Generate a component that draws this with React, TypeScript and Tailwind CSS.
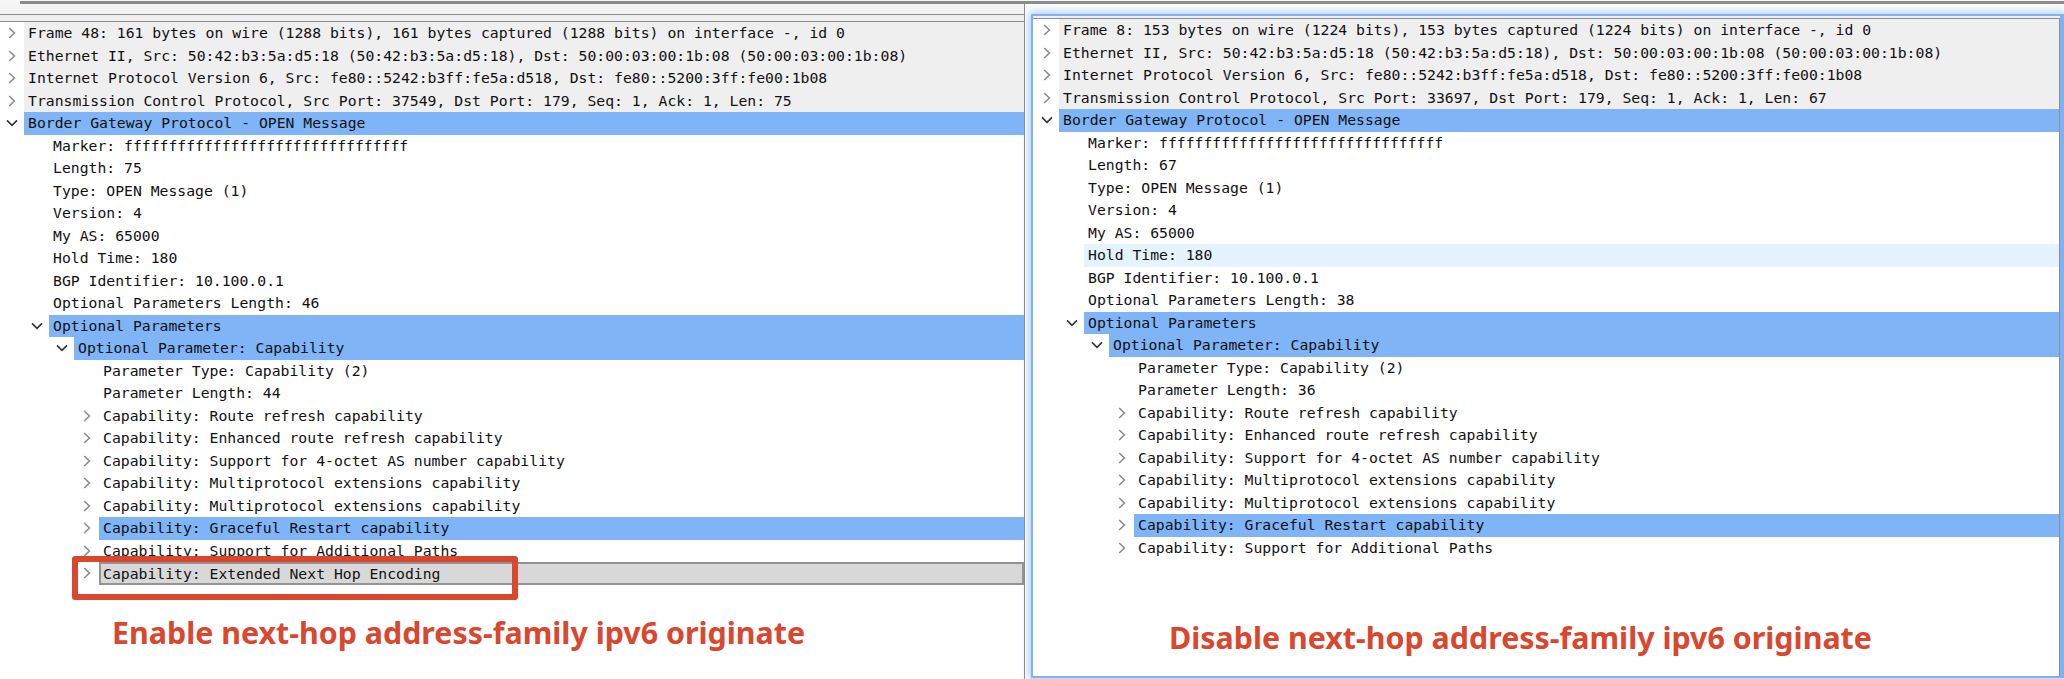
import React from "react";

type RowData = {
    text: string
    depth: number
    arrow?: "right" | "down"
    look?: "head" | "selected" | "hover" | "focus"
}

const depthWidth = ["w-[24px]", "w-[49px]", "w-[74px]", "w-[99px]"]

const looks = {
    plain: "pl-[4px]",
    head: "pl-[4px] bg-[#efefef]",
    selected: "pl-[4px] bg-[#7fb4f7]",
    hover: "pl-[4px] bg-[#e5f3ff]",
    focus: "pl-[2px] pt-[1px] bg-[#d8d8d8] border-2 border-[#939393]",
}

const buildRows = (v: {
    frame: string, port: string, length: string, optLength: string, paramLength: string, hover?: boolean, extended?: boolean
}): RowData[] => {
    const rows: RowData[] = [
        { text: v.frame, depth: 0, arrow: "right", look: "head" },
        { text: "Ethernet II, Src: 50:42:b3:5a:d5:18 (50:42:b3:5a:d5:18), Dst: 50:00:03:00:1b:08 (50:00:03:00:1b:08)", depth: 0, arrow: "right", look: "head" },
        { text: "Internet Protocol Version 6, Src: fe80::5242:b3ff:fe5a:d518, Dst: fe80::5200:3ff:fe00:1b08", depth: 0, arrow: "right", look: "head" },
        { text: v.port, depth: 0, arrow: "right", look: "head" },
        { text: "Border Gateway Protocol - OPEN Message", depth: 0, arrow: "down", look: "selected" },
        { text: "Marker: ffffffffffffffffffffffffffffffff", depth: 1 },
        { text: `Length: ${v.length}`, depth: 1 },
        { text: "Type: OPEN Message (1)", depth: 1 },
        { text: "Version: 4", depth: 1 },
        { text: "My AS: 65000", depth: 1 },
        { text: "Hold Time: 180", depth: 1, look: v.hover ? "hover" : undefined },
        { text: "BGP Identifier: 10.100.0.1", depth: 1 },
        { text: `Optional Parameters Length: ${v.optLength}`, depth: 1 },
        { text: "Optional Parameters", depth: 1, arrow: "down", look: "selected" },
        { text: "Optional Parameter: Capability", depth: 2, arrow: "down", look: "selected" },
        { text: "Parameter Type: Capability (2)", depth: 3 },
        { text: `Parameter Length: ${v.paramLength}`, depth: 3 },
        { text: "Capability: Route refresh capability", depth: 3, arrow: "right" },
        { text: "Capability: Enhanced route refresh capability", depth: 3, arrow: "right" },
        { text: "Capability: Support for 4-octet AS number capability", depth: 3, arrow: "right" },
        { text: "Capability: Multiprotocol extensions capability", depth: 3, arrow: "right" },
        { text: "Capability: Multiprotocol extensions capability", depth: 3, arrow: "right" },
        { text: "Capability: Graceful Restart capability", depth: 3, arrow: "right", look: "selected" },
        { text: "Capability: Support for Additional Paths", depth: 3, arrow: "right" },
    ]
    if (v.extended) rows.push({ text: "Capability: Extended Next Hop Encoding", depth: 3, arrow: "right", look: "focus" })
    return rows
}

const Arrow = ({ dir }: { dir: "right" | "down" }) => (
    <span className="w-[24px] flex items-center justify-center">
        {dir === "right" ? (
            <svg width="8" height="12" viewBox="0 0 8 12" fill="none" stroke="#8c8c8c" strokeWidth="1.6">
                <path d="M1.2 1 L6.4 6 L1.2 11" />
            </svg>
        ) : (
            <svg width="12" height="8" viewBox="0 0 12 8" fill="none" stroke="#333333" strokeWidth="1.6">
                <path d="M1 1.4 L6 6.4 L11 1.4" />
            </svg>
        )}
    </span>
)

const Row = ({ row }: { row: RowData }) => (
    <div className="flex h-[22.5px] shrink-0">
        <div className={`${depthWidth[row.depth]} shrink-0 flex justify-end`}>
            {row.arrow && <Arrow dir={row.arrow} />}
        </div>
        <div className={`flex-1 min-w-0 flex items-center whitespace-pre ${looks[row.look ?? "plain"]}`}>
            {row.text}
        </div>
    </div>
)

const noteClass = "font-['Noto_Sans'] font-bold text-[30.38px] leading-[40px] text-[#d9472f] whitespace-pre"

export default function App() {
    const leftRows = buildRows({
        frame: "Frame 48: 161 bytes on wire (1288 bits), 161 bytes captured (1288 bits) on interface -, id 0",
        port: "Transmission Control Protocol, Src Port: 37549, Dst Port: 179, Seq: 1, Ack: 1, Len: 75",
        length: "75", optLength: "46", paramLength: "44", extended: true,
    })
    const rightRows = buildRows({
        frame: "Frame 8: 153 bytes on wire (1224 bits), 153 bytes captured (1224 bits) on interface -, id 0",
        port: "Transmission Control Protocol, Src Port: 33697, Dst Port: 179, Seq: 1, Ack: 1, Len: 67",
        length: "67", optLength: "38", paramLength: "36", hover: true,
    })

    return (
        <div className="w-[2064px] h-[679px] overflow-hidden bg-white flex flex-col font-['DejaVu_Sans_Mono'] text-[14.75px] text-[#111111]">
            {/* scrollbar strip left over at the top of the capture */}
            <div className="h-[4px] shrink-0 pl-[20px] pt-[1px] bg-[#f6f6f6]">
                <div className="h-[3px] bg-[#8c8c8c]" />
            </div>

            <div className="flex-1 min-h-0 flex">
                {/* left capture, next-hop enabled */}
                <div className="relative w-[1025px] shrink-0 flex flex-col border-r border-[#8e8e8e] overflow-hidden">
                    <div className="h-[10px] shrink-0 bg-[#f4f4f4] border-b border-[#8e8e8e] box-content" />
                    <div className="h-[6px] shrink-0 bg-[#f0f0f0] border-b border-[#8e8e8e] box-content" />
                    <div className="flex flex-col">
                        {leftRows.map(row => <Row key={row.text} row={row} />)}
                    </div>
                    <div className={`${noteClass} pl-[112px] mt-[28px]`}>Enable next-hop address-family ipv6 originate</div>
                    <div className="absolute left-[72px] top-[552px] w-[446px] h-[44px] border-[6px] border-[#d9472f] rounded-[3px]" />
                </div>

                {/* right capture, the window on top */}
                <div className="flex-1 min-w-0 pl-[6px] pt-[10px] pb-[1px] flex">
                    <div className="flex-1 min-w-0 flex flex-col bg-white border-t-2 border-b-2 border-l-2 border-r-[4px] border-[#7fb1f5] shadow-[0_0_9px_2px_#a9caf6] overflow-hidden">
                        <div className="h-[2px] shrink-0 bg-[#f0f0f0] border-b border-[#8e8e8e] box-content" />
                        <div className="flex-1 min-h-0 flex flex-col pl-[2px] border-r border-[#8e8e8e]">
                            {rightRows.map(row => <Row key={row.text} row={row} />)}
                            <div className={`${noteClass} pl-[134px] mt-[59px]`}>Disable next-hop address-family ipv6 originate</div>
                        </div>
                    </div>
                </div>
            </div>
        </div>
    )
}
